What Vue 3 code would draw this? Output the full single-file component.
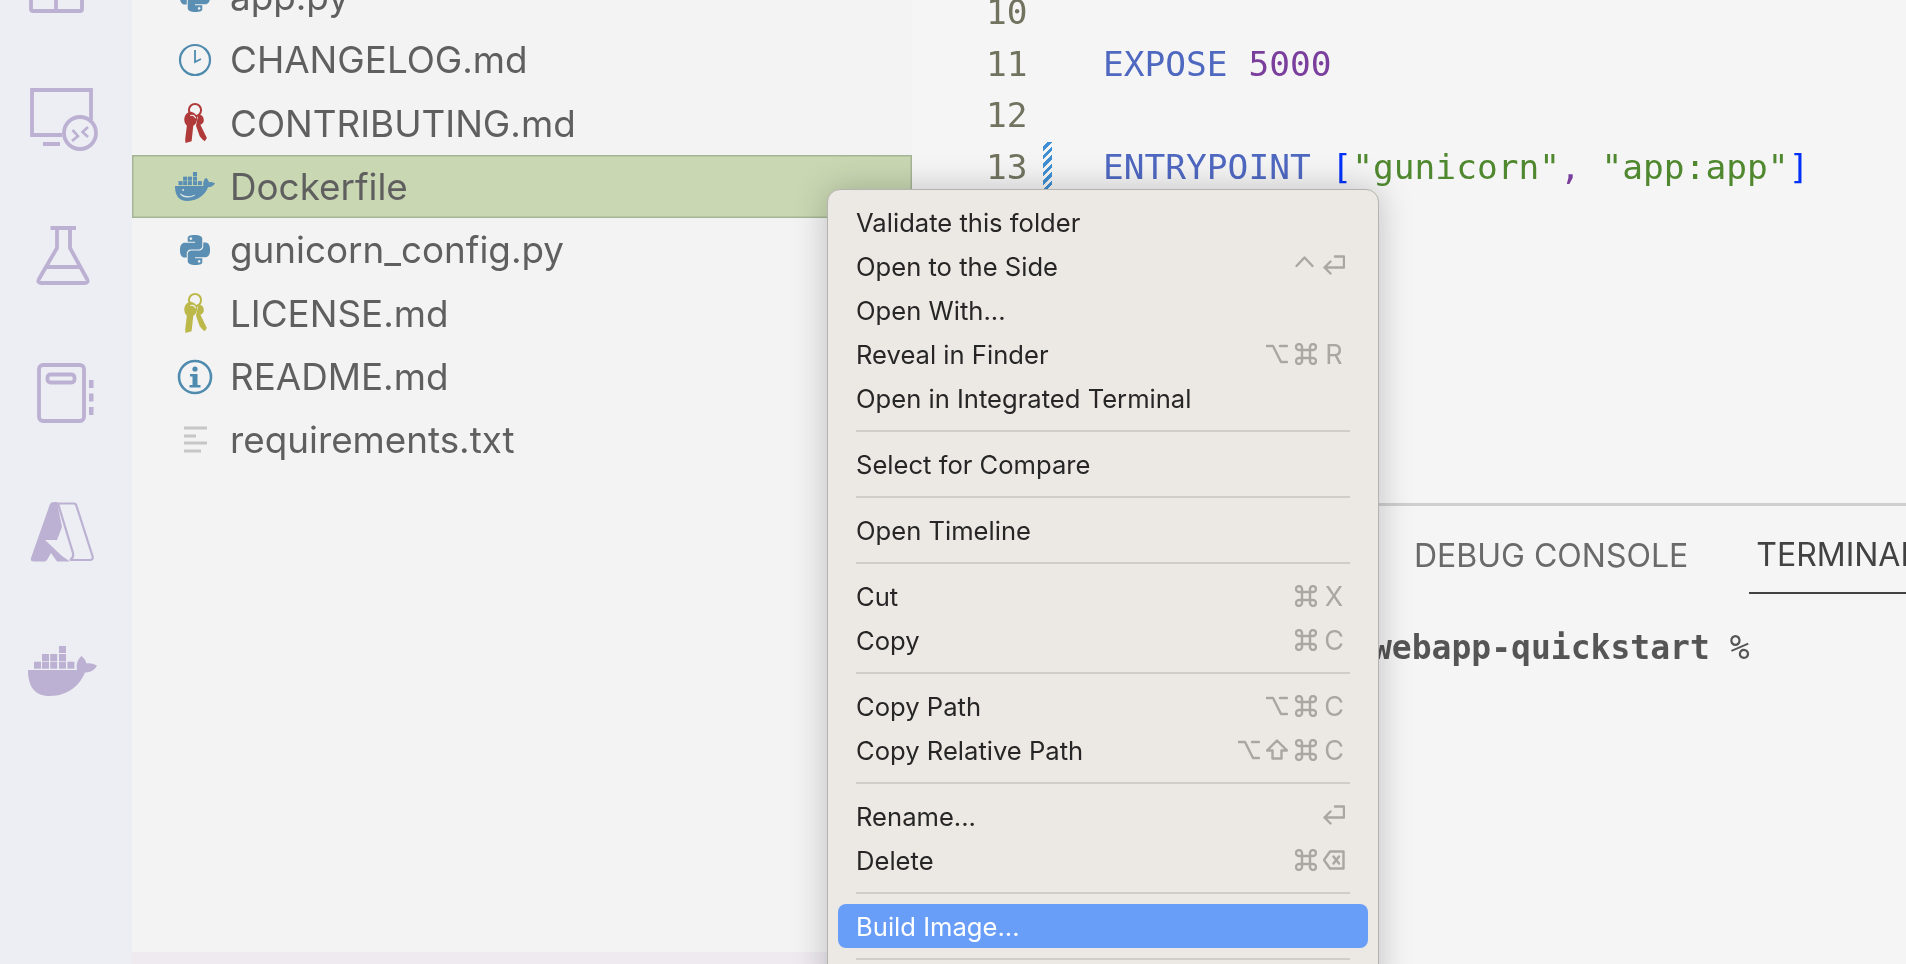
<script setup>
const PY = "M14.25.18l.9.2.73.26.59.3.45.32.34.34.25.34.16.33.1.3.04.26.02.2-.01.13V8.5l-.05.63-.13.55-.21.46-.26.38-.3.31-.33.25-.35.19-.35.14-.33.1-.3.07-.26.04-.21.02H8.77l-.69.05-.59.14-.5.22-.41.27-.33.32-.27.35-.2.36-.15.37-.1.35-.07.32-.04.27-.02.21v3.06H3.17l-.21-.03-.28-.07-.32-.12-.35-.18-.36-.26-.36-.36-.35-.46-.32-.59-.28-.73-.21-.88-.14-1.05-.05-1.23.06-1.22.16-1.04.24-.87.32-.71.36-.57.4-.44.42-.33.42-.24.4-.16.36-.1.32-.05.24-.01h.16l.06.01h8.16v-.83H6.18l-.01-2.75-.02-.37.05-.34.11-.31.17-.28.25-.26.31-.23.38-.2.44-.18.51-.15.58-.12.64-.1.71-.06.77-.04.84-.02 1.27.05zm-6.3 1.98l-.23.33-.08.41.08.41.23.34.33.22.41.09.41-.09.33-.22.23-.34.08-.41-.08-.41-.23-.33-.33-.22-.41-.09-.41.09zm13.09 3.95l.28.06.32.12.35.18.36.27.36.35.35.47.32.59.28.73.21.88.14 1.04.05 1.23-.06 1.23-.16 1.04-.24.86-.32.71-.36.57-.4.45-.42.33-.42.24-.4.16-.36.09-.32.05-.24.02-.16-.01h-8.22v.82h5.84l.01 2.76.02.36-.05.34-.11.31-.17.29-.25.25-.31.24-.38.2-.44.17-.51.15-.58.13-.64.09-.71.07-.77.04-.84.01-1.27-.04-1.07-.14-.9-.2-.73-.25-.59-.3-.45-.33-.34-.34-.25-.34-.16-.33-.1-.3-.04-.25-.02-.2.01-.13v-5.34l.05-.64.13-.54.21-.46.26-.38.3-.32.33-.24.35-.2.35-.14.33-.1.3-.06.26-.04.21-.02.13-.01h5.84l.69-.05.59-.14.5-.21.41-.28.33-.32.27-.35.2-.36.15-.36.1-.35.07-.32.04-.28.02-.21V6.07h2.09l.14.01zm-6.47 14.25l-.23.33-.08.41.08.41.23.33.33.23.41.08.41-.08.33-.23.23-.33.08-.41-.08-.41-.23-.33-.33-.23-.41-.08-.41.08z"

const WHALE = "M28 670H77C76 665 77 660 81.5 656C84 658 86 661 86.5 663.5C90 662.5 94 664 97 665.5C95 670 90 672.5 85 672.5C80 685 68 696 50 696C34 696 28 686 28 670Z"
const BOXES = [
  [34, 661.7], [42, 661.7], [50.2, 661.7], [59, 661.7], [67.4, 661.7],
  [42, 654], [50.2, 654], [59, 654], [59, 646],
]

const files = [
  { name: 'app.py', icon: 'py' },
  { name: 'CHANGELOG.md', icon: 'clock' },
  { name: 'CONTRIBUTING.md', icon: 'keys', color: '#b03a3a' },
  { name: 'Dockerfile', icon: 'docker', selected: true },
  { name: 'gunicorn_config.py', icon: 'py' },
  { name: 'LICENSE.md', icon: 'keys', color: '#bcb84a' },
  { name: 'README.md', icon: 'info' },
  { name: 'requirements.txt', icon: 'txt' },
]

const glyphs = {
  ctrl: 'M1.5 11L9.5 2.5L17.5 11',
  ret: 'M12 1.5H21V12.5H1.5M7.5 6.500L1.500 12.500L7.500 18.500',
  opt: 'M0.5 3H7L15 19H21M14 3H21',
  cmd: 'M7 7H4.5A3 3 0 1 1 7 4.5V17.5A3 3 0 1 1 4.5 15H17.5A3 3 0 1 1 15 17.5V4.5A3 3 0 1 1 17.5 7Z',
  shift: 'M11 1.5L21 11.5H15.5V19.5H6.5V11.5H1Z',
  del: 'M7 2.5H20.5V19.5H7L1 11ZM10.5 7.5L16 14.5M16 7.5L10.5 14.5',
}

const menu = [
  { label: 'Validate this folder' },
  { label: 'Open to the Side', keys: ['ctrl', 'ret'] },
  { label: 'Open With...' },
  { label: 'Reveal in Finder', keys: ['opt', 'cmd', 'R'] },
  { label: 'Open in Integrated Terminal' },
  { sep: true },
  { label: 'Select for Compare' },
  { sep: true },
  { label: 'Open Timeline' },
  { sep: true },
  { label: 'Cut', keys: ['cmd', 'X'] },
  { label: 'Copy', keys: ['cmd', 'C'] },
  { sep: true },
  { label: 'Copy Path', keys: ['opt', 'cmd', 'C'] },
  { label: 'Copy Relative Path', keys: ['opt', 'shift', 'cmd', 'C'] },
  { sep: true },
  { label: 'Rename...', keys: ['ret'] },
  { label: 'Delete', keys: ['cmd', 'del'] },
  { sep: true },
  { label: 'Build Image...', active: true },
  { sep: true },
]
</script>

<template>
  <div class="window">
    <aside class="activity">
      <svg class="act" viewBox="0 -96 132 139">
        <path class="ln" d="M31 -20V9Q31 11 33 11H80Q82 11 82 9V-20M56 -20V11" />
      </svg>
      <svg class="act" viewBox="0 43 132 139">
        <path class="ln" d="M91 120V90H32V135H62M43 144H60" />
        <circle class="ln" cx="80" cy="133" r="16" />
        <path class="ln thin" d="M72.5 130L78 136L72 141M88 127L82.5 132L88 137" />
      </svg>
      <svg class="act" viewBox="0 182 132 139">
        <path class="ln" d="M50.5 228H76M57 228V248L39 279Q37 283 41 283H85Q89 283 87 279L70 248V228M47 267H80" />
      </svg>
      <svg class="act" viewBox="0 321 132 139">
        <rect class="ln" x="39" y="365" width="45" height="56" rx="4" />
        <rect class="ln" x="47.5" y="374.5" width="27" height="8" rx="3" />
        <path class="fl" d="M89 380h4.5v8H89zM89 393.500h4.500v8H89zM89 407h4.500v8H89z" />
      </svg>
      <svg class="act" viewBox="0 460 132 139">
        <path class="fl" d="M50 504Q51 502 54 502H57L62 527L57 540H45L62 556L70 561.500H57L51 553L47 560Q46 561.500 44 561.500H34Q30 561.500 31 558Z" />
        <path class="ln az" d="M58 503.500H74Q76 503.500 76.500 506L92.500 556Q93.500 560 90 560H70Q74 558 73 553Z" />
      </svg>
      <svg class="act" viewBox="0 599 132 139">
        <path class="fl" :d="WHALE" />
        <rect v-for="(b, i) in BOXES" :key="i" class="fl" :x="b[0]" :y="b[1]" width="7" height="7" />
      </svg>
    </aside>

    <section class="sidebar">
      <ul class="files">
        <li v-for="f in files" :key="f.name" class="file" :class="{ selected: f.selected }">
          <span class="ficon">
            <svg v-if="f.icon === 'py'" class="i-py" viewBox="0 0 24 24"><path :d="PY" /></svg>
            <svg v-else-if="f.icon === 'clock'" class="i-round" viewBox="0 0 34 34">
              <circle cx="17" cy="17" r="15" fill="none" stroke="#4e8bae" stroke-width="2.200" />
              <path d="M17 7V19L23 16" fill="none" stroke="#4e8bae" stroke-width="1.800" />
            </svg>
            <svg v-else-if="f.icon === 'keys'" class="i-keys" viewBox="70 37 67 118" :style="{ color: f.color }">
              <circle cx="102" cy="58" r="18" fill="none" stroke="currentColor" stroke-width="6" />
              <path fill="currentColor" d="M112 70Q128 72 128 88Q128 98 118 101L137 140L131 150L124 145L116 135L105 104Z" />
              <path fill="currentColor" d="M88 62Q110 66 108 86Q106 100 97 104L92 150L74 155L73 145L78 104Q68 96 71 80Q74 66 88 62Z" />
              <path d="M101 104L97 140M88 74Q100 70 104 82" fill="none" stroke="#f3f3f3" stroke-width="3" />
            </svg>
            <svg v-else-if="f.icon === 'docker'" class="i-docker" viewBox="28 646 69 50">
              <path fill="#5a8fb3" :d="WHALE" />
              <rect v-for="(b, i) in BOXES" :key="i" fill="#5a8fb3" :x="b[0]" :y="b[1]" width="7" height="7" />
              <path d="M37 684Q46 694 62 686Q50 692 37 684Z" fill="#eaf0ea" stroke="#eaf0ea" />
              <circle cx="42" cy="677" r="1.500" fill="#eaf0ea" />
            </svg>
            <svg v-else-if="f.icon === 'info'" class="i-info" viewBox="0 0 36 36">
              <circle cx="18" cy="18" r="16" fill="none" stroke="#4e8bae" stroke-width="2.600" />
              <circle cx="18" cy="10" r="2.600" fill="#4e8bae" />
              <path fill="#4e8bae" d="M13 15H20.500V26H23.500V28.500H12.500V26H15.500V17.500H13Z" />
            </svg>
            <svg v-else class="i-txt" viewBox="0 0 24 28">
              <path d="M1 2H24M1 10H13M1 17H24M1 25H18" fill="none" stroke="#c6c6c6" stroke-width="3" />
            </svg>
          </span>
          <span class="fname">{{ f.name }}</span>
        </li>
      </ul>
      <div class="strip"></div>
    </section>

    <main class="main">
      <div class="editor">
        <div class="line"><span class="num">10</span></div>
        <div class="line">
          <span class="num">11</span><span class="mark none"></span>
          <code><span class="kw">EXPOSE</span> <span class="pu">5000</span></code>
        </div>
        <div class="line"><span class="num">12</span></div>
        <div class="line">
          <span class="num">13</span><span class="mark"></span>
          <code><span class="kw">ENTRYPOINT</span> <span class="br">[</span><span class="st">"gunicorn"</span><span class="pu">,</span> <span class="st">"app:app"</span><span class="br">]</span></code>
        </div>
      </div>
      <div class="panel">
        <div class="tabs">
          <span class="tab">DEBUG CONSOLE</span>
          <span class="tab on">TERMINAL</span>
        </div>
        <div class="term"><b>webapp-quickstart</b> %</div>
      </div>
    </main>

    <div class="menu">
      <template v-for="(m, i) in menu" :key="i">
        <div v-if="m.sep" class="sep"></div>
        <div v-else class="item" :class="{ active: m.active }">
          <span>{{ m.label }}</span>
          <span v-if="m.keys" class="keys">
            <span v-for="k in m.keys" :key="k" class="key">
              <svg v-if="glyphs[k]" viewBox="0 0 22 22"><path :d="glyphs[k]" /></svg>
              <template v-else>{{ k }}</template>
            </span>
          </span>
        </div>
      </template>
    </div>
  </div>
</template>

<style scoped>
.window {
  position: relative;
  display: flex;
  width: 1906px;
  height: 964px;
  overflow: hidden;
  font-family: Inter, "Liberation Sans", sans-serif;
  filter: blur(0.4px);
}

/* activity bar */
.activity {
  flex: none;
  width: 132px;
  height: 964px;
  background: #eceef4;
  overflow: hidden;
}
.act {
  display: block;
  width: 132px;
  height: 139px;
  overflow: visible;
}
.act:first-child {
  margin-top: -96px;
}
.ln {
  fill: none;
  stroke: #bcb1d2;
  stroke-width: 3.8;
}
.ln.thin {
  stroke-width: 2.6;
}
.ln.az {
  stroke-width: 2.200;
}
.fl {
  fill: #bcb1d2;
}

/* explorer */
.sidebar {
  flex: none;
  display: flex;
  flex-direction: column;
  width: 780px;
  height: 964px;
  background: #f3f3f3;
}
.files {
  flex: 1;
  margin: -35px 0 0;
  padding: 0;
  list-style: none;
}
.file {
  display: flex;
  align-items: center;
  height: 63.330px;
  padding-left: 41px;
  font-size: 36.800px;
  color: #5f5f5f;
}
.file.selected {
  background: #c9d8b3;
  box-shadow: inset 0 0 0 1.500px #a6b596;
}
.ficon {
  flex: none;
  display: flex;
  align-items: center;
  justify-content: center;
  width: 44px;
  margin-right: 13px;
}
.ficon svg {
  display: block;
}
.i-py {
  width: 30px;
  height: 30px;
  fill: #5a8fb3;
}
.i-round {
  width: 34px;
  height: 34px;
}
.i-keys {
  width: 23px;
  height: 40px;
}
.i-docker {
  width: 40px;
  height: 29px;
}
.i-info {
  width: 36px;
  height: 36px;
}
.i-txt {
  width: 24px;
  height: 28px;
}
.strip {
  flex: none;
  height: 12px;
  background: #eeeaf0;
}

/* editor */
.main {
  flex: 1;
  min-width: 0;
  display: flex;
  flex-direction: column;
  background: #f5f5f5;
}
.editor {
  flex: none;
  height: 503px;
  overflow: hidden;
  font-family: "DejaVu Sans Mono", monospace;
  font-size: 34.500px;
}
.line {
  display: flex;
  align-items: center;
  height: 51.700px;
  padding-left: 74px;
  white-space: pre;
}
.line:first-child {
  margin-top: -14px;
}
.num {
  width: 42px;
  color: #71735f;
}
.mark {
  align-self: stretch;
  width: 9px;
  margin: 1px 51px 0 15px;
  background: repeating-linear-gradient(-45deg, #3f8fd2 0 3px, transparent 3px 6px);
}
.mark.none {
  background: none;
}
code {
  font: inherit;
}
.kw {
  color: #4f68c0;
}
.pu {
  color: #7a3e9d;
}
.br {
  color: #0431fa;
}
.st {
  color: #50882f;
}

/* panel */
.panel {
  flex: 1;
  border-top: 3px solid #cfcfcf;
  overflow: hidden;
}
.tabs {
  display: flex;
  align-items: stretch;
  height: 88px;
  padding-left: 495px;
  font-size: 32px;
  white-space: nowrap;
}
.tab {
  display: flex;
  align-items: center;
  padding: 11px 7px 0;
  color: #6a6a6a;
}
.tab + .tab {
  margin-left: 54px;
}
.tab.on {
  color: #424242;
  border-bottom: 2px solid #424242;
}
.term {
  margin-top: 32px;
  padding-left: 460px;
  font-family: "DejaVu Sans Mono", monospace;
  font-size: 33px;
  line-height: 44px;
  color: #555555;
}

/* context menu */
.menu {
  position: absolute;
  left: 827px;
  top: 189px;
  width: 552px;
  box-sizing: border-box;
  padding: 10px 0 30px;
  background: #ece8e4;
  border: 1px solid #b5b3b0;
  border-radius: 13px;
  box-shadow: 0 0 34px rgba(0, 0, 0, 0.22);
  font-size: 25.600px;
  color: #262626;
}
.item {
  display: flex;
  align-items: center;
  justify-content: space-between;
  height: 44px;
  margin: 0 10px;
  padding: 0 23px 0 18px;
  border-radius: 8px;
  white-space: nowrap;
}
.item.active {
  background: #689ef8;
  color: #ffffff;
}
.sep {
  height: 2px;
  margin: 10px 28px;
  background: #d0ccc8;
}
.keys {
  display: flex;
  gap: 6.500px;
  font-size: 27px;
  color: #aaa6a2;
}
.key {
  display: flex;
  align-items: center;
  justify-content: center;
  width: 22px;
  height: 22px;
}
.key svg {
  display: block;
  width: 22px;
  height: 22px;
  fill: none;
  stroke: #aaa6a2;
  stroke-width: 2.400;
  stroke-linejoin: round;
  stroke-linecap: round;
}
</style>
